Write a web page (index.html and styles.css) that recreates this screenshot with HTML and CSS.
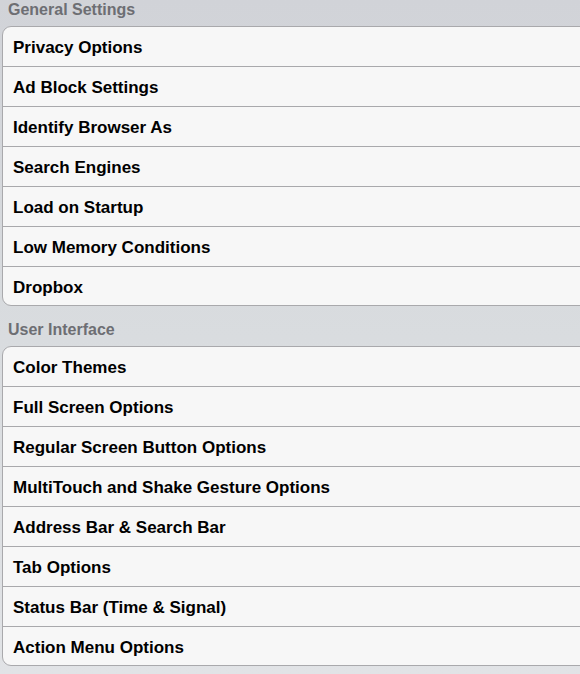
FILE: index.html
```html
<!DOCTYPE html>
<html lang="en">
<head>
    <meta charset="UTF-8">
    <meta name="viewport" content="width=device-width, initial-scale=1.0">
    <title>Settings</title>
    <link rel="stylesheet" href="styles.css">
</head>
<body>
    <div class="section-title first">General Settings</div>
    <ul class="group">
        <li>Privacy Options</li>
        <li>Ad Block Settings</li>
        <li>Identify Browser As</li>
        <li>Search Engines</li>
        <li>Load on Startup</li>
        <li>Low Memory Conditions</li>
        <li>Dropbox</li>
    </ul>
    <div class="section-title">User Interface</div>
    <ul class="group">
        <li>Color Themes</li>
        <li>Full Screen Options</li>
        <li>Regular Screen Button Options</li>
        <li>MultiTouch and Shake Gesture Options</li>
        <li>Address Bar &amp; Search Bar</li>
        <li>Tab Options</li>
        <li>Status Bar (Time &amp; Signal)</li>
        <li>Action Menu Options</li>
    </ul>
</body>
</html>
```

FILE: styles.css
```css
html, body {
    height: 100%;
}
body {
    margin: 0;
    padding: 0;
    font-family: "Liberation Sans", Arial, sans-serif;
    background: linear-gradient(#d1d3d8, #d9dcdf 50%, #e1e3e6);
    overflow: hidden;
}
.section-title {
    height: 40px;
    line-height: 47px;
    padding-left: 8px;
    font-size: 16px;
    font-weight: bold;
    color: #6d6e73;
    box-sizing: border-box;
}
.section-title.first {
    height: 26px;
    line-height: 19px;
}
.group {
    list-style: none;
    margin: 0 -12px 0 2px;
    padding: 0;
    background: #f7f7f7;
    border: 1px solid #a9a9ac;
    border-radius: 9px;
}
.group li {
    height: 40px;
    line-height: 41px;
    padding-left: 10px;
    font-size: 17px;
    font-weight: bold;
    color: #000;
    border-top: 1px solid #a9a9ac;
    box-sizing: border-box;
}
.group li:first-child {
    border-top: none;
    height: 39px;
}
.group li:last-child {
    height: 39px;
}
```
